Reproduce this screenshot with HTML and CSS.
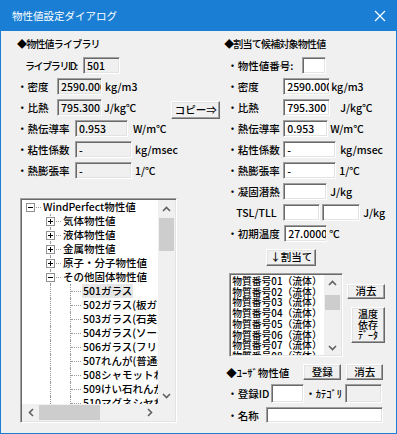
FILE: index.html
```html
<!DOCTYPE html>
<html lang="ja">
<head>
    <meta charset="UTF-8">
    <title>物性値設定ダイアログ</title>
    <link rel="stylesheet" href="styles.css">
</head>
<body>

<div class="window">
    <div class="titlebar">
        <span class="title">物性値設定ダイアログ</span>
        <svg class="close" width="12" height="12" viewBox="0 0 12 12"><path d="M1 1 L11 11 M11 1 L1 11" stroke="#fff" stroke-width="1.2"/></svg>
    </div>

    <div class="body">
        <!-- left: library values -->
        <div class="left">
            <div class="heading">◆物性値ライブラリ</div>
            <div class="rows">
                <div class="row id-row">
                    <span class="lbl w58 narrow">ライブラリID:</span>
                    <div class="field ro w37">501</div>
                </div>
                <div class="row">
                    <span class="lbl w40">・密度</span>
                    <div class="field ro w45">2590.000</div>
                    <span class="unit m3">kg/m3</span>
                </div>
                <div class="row">
                    <span class="lbl w40">・比熱</span>
                    <div class="field ro w45">795.300</div>
                    <span class="unit m2">J/kg℃</span>
                    <button class="btn copy-btn">コピー⇒</button>
                </div>
                <div class="row">
                    <span class="lbl w58">・熱伝導率</span>
                    <div class="field ro w53">0.953</div>
                    <span class="unit m5">W/m℃</span>
                </div>
                <div class="row">
                    <span class="lbl w58">・粘性係数</span>
                    <div class="field ro w57">-</div>
                    <span class="unit m3">kg/msec</span>
                </div>
                <div class="row">
                    <span class="lbl w58">・熱膨張率</span>
                    <div class="field ro w57">-</div>
                    <span class="unit m3">1/℃</span>
                </div>
            </div>

            <div class="tree">
                <div class="tree-view">
                    <div class="node"><span class="ind exp"><i class="box"></i></span><span class="txt">WindPerfect物性値</span></div>
                    <div class="node"><span class="ind"></span><span class="ind exp vl"><i class="box plus"></i></span><span class="txt">気体物性値</span></div>
                    <div class="node"><span class="ind"></span><span class="ind exp vl"><i class="box plus"></i></span><span class="txt">液体物性値</span></div>
                    <div class="node"><span class="ind"></span><span class="ind exp vl"><i class="box plus"></i></span><span class="txt">金属物性値</span></div>
                    <div class="node"><span class="ind"></span><span class="ind exp vl"><i class="box plus"></i></span><span class="txt">原子・分子物性値</span></div>
                    <div class="node"><span class="ind"></span><span class="ind exp vl"><i class="box"></i></span><span class="txt">その他固体物性値</span></div>
                    <div class="node"><span class="ind"></span><span class="ind vl"></span><span class="ind leaf vl"></span><span class="txt sel">501ガラス</span></div>
                    <div class="node"><span class="ind"></span><span class="ind vl"></span><span class="ind leaf vl"></span><span class="txt">502ガラス(板ガラス)</span></div>
                    <div class="node"><span class="ind"></span><span class="ind vl"></span><span class="ind leaf vl"></span><span class="txt">503ガラス(石英ガラス)</span></div>
                    <div class="node"><span class="ind"></span><span class="ind vl"></span><span class="ind leaf vl"></span><span class="txt">504ガラス(ソーダガラス)</span></div>
                    <div class="node"><span class="ind"></span><span class="ind vl"></span><span class="ind leaf vl"></span><span class="txt">506ガラス(フリントガラス)</span></div>
                    <div class="node"><span class="ind"></span><span class="ind vl"></span><span class="ind leaf vl"></span><span class="txt">507れんが(普通赤れんが)</span></div>
                    <div class="node"><span class="ind"></span><span class="ind vl"></span><span class="ind leaf vl"></span><span class="txt">508シャモットれんが</span></div>
                    <div class="node"><span class="ind"></span><span class="ind vl"></span><span class="ind leaf vl"></span><span class="txt">509けい石れんが(</span></div>
                    <div class="node"><span class="ind"></span><span class="ind vl"></span><span class="ind leaf vl"></span><span class="txt">510マグネシヤれんが</span></div>
                </div>
                <div class="vscroll">
                    <div class="arrow"><svg width="9" height="6" viewBox="0 0 9 6"><path d="M1 5 L4.5 1.5 L8 5" fill="none" stroke="#606060" stroke-width="1.6"/></svg></div>
                    <div class="track"><div class="thumb v-thumb"></div></div>
                    <div class="arrow"><svg width="9" height="6" viewBox="0 0 9 6"><path d="M1 1 L4.5 4.5 L8 1" fill="none" stroke="#606060" stroke-width="1.6"/></svg></div>
                </div>
                <div class="hscroll">
                    <div class="arrow"><svg width="6" height="9" viewBox="0 0 6 9"><path d="M5 1 L1.5 4.5 L5 8" fill="none" stroke="#606060" stroke-width="1.6"/></svg></div>
                    <div class="track"><div class="thumb h-thumb"></div></div>
                    <div class="arrow"><svg width="6" height="9" viewBox="0 0 6 9"><path d="M1 1 L4.5 4.5 L1 8" fill="none" stroke="#606060" stroke-width="1.6"/></svg></div>
                </div>
                <div class="corner"></div>
            </div>
        </div>

        <!-- right: assignment target -->
        <div class="right">
            <div class="heading">◆割当て候補対象物性値</div>
            <div class="rows">
                <div class="row">
                    <span class="lbl w75">・物性値番号:</span>
                    <div class="field w24"></div>
                </div>
                <div class="row">
                    <span class="lbl w56">・密度</span>
                    <div class="field w47">2590.000</div>
                    <span class="unit m1">kg/m3</span>
                </div>
                <div class="row">
                    <span class="lbl w56">・比熱</span>
                    <div class="field w47">795.300</div>
                    <span class="unit m10">J/kg℃</span>
                </div>
                <div class="row">
                    <span class="lbl w56">・熱伝導率</span>
                    <div class="field w45">0.953</div>
                    <span class="unit m2">W/m℃</span>
                </div>
                <div class="row">
                    <span class="lbl w56">・粘性係数</span>
                    <div class="field w53">-</div>
                    <span class="unit m4">kg/msec</span>
                </div>
                <div class="row">
                    <span class="lbl w56">・熱膨張率</span>
                    <div class="field w53">-</div>
                    <span class="unit m3">1/℃</span>
                </div>
                <div class="row">
                    <span class="lbl w56">・凝固潜熱</span>
                    <div class="field w44"></div>
                    <span class="unit m3">J/kg</span>
                </div>
                <div class="row">
                    <span class="lbl w56 tsl">TSL/TLL</span>
                    <div class="field w37"></div>
                    <div class="field w38 gap2"></div>
                    <span class="unit m3">J/kg</span>
                </div>
                <div class="row">
                    <span class="lbl w57">・初期温度</span>
                    <div class="field w43">27.00000</div>
                    <span class="unit m2">℃</span>
                </div>
            </div>

            <button class="btn assign-btn">↓割当て</button>

            <div class="list-area">
                <div class="listbox">
                    <div class="list-items">
                        <div>物質番号01（流体）</div>
                        <div>物質番号02（流体）</div>
                        <div>物質番号03（流体）</div>
                        <div>物質番号04（流体）</div>
                        <div>物質番号05（流体）</div>
                        <div>物質番号06（流体）</div>
                        <div>物質番号07（流体）</div>
                        <div>物質番号08（流体）</div>
                    </div>
                    <div class="vscroll list-scroll">
                        <div class="arrow"><svg width="9" height="6" viewBox="0 0 9 6"><path d="M1 5 L4.5 1.5 L8 5" fill="none" stroke="#606060" stroke-width="1.6"/></svg></div>
                        <div class="track"><div class="thumb l-thumb"></div></div>
                        <div class="arrow"><svg width="9" height="6" viewBox="0 0 9 6"><path d="M1 1 L4.5 4.5 L8 1" fill="none" stroke="#606060" stroke-width="1.6"/></svg></div>
                    </div>
                </div>
                <div class="list-buttons">
                    <button class="btn del-btn">消去</button>
                    <button class="btn temp-btn">温度<br>依存<br>ﾃﾞｰﾀ</button>
                </div>
            </div>

            <div class="user-row">
                <span class="user-head">◆ﾕｰｻﾞ物性値</span>
                <button class="btn reg-btn">登録</button>
                <button class="btn del2-btn">消去</button>
            </div>
            <div class="row reg-row">
                <span class="lbl w44">・登録ID</span>
                <div class="field w33 tall"></div>
                <span class="lbl cat">・ｶﾃｺﾞﾘ</span>
                <div class="field ro w37 tall"></div>
            </div>
            <div class="row name-row">
                <span class="lbl w39">・名称</span>
                <div class="field w117"></div>
            </div>
        </div>
    </div>
</div>

</body>
</html>
```

FILE: styles.css
```css
body {
    margin: 0;
    font-family: "Noto Sans CJK JP", "Noto Sans", sans-serif;
    font-size: 10.5px;
    font-weight: 500;
    color: #000;
    background: #f0f0f0;
}

.window {
    width: 397px;
    height: 434px;
    box-sizing: border-box;
    border: 1px solid #1a7fd4;
    border-top: none;
    background: #f0f0f0;
    display: flex;
    flex-direction: column;
}

.titlebar {
    flex: none;
    height: 31px;
    background: #1a7fd4;
    color: #fff;
    display: flex;
    align-items: center;
    padding: 0 10px 0 11px;
}

.title {
    flex: 1;
    font-size: 10.5px;
    font-weight: 400;
}

.body {
    flex: 1;
    display: flex;
}

.left {
    width: 224px;
    box-sizing: border-box;
    padding: 6px 3px 0 16px;
}

.right {
    flex: 1;
    padding: 6px 11px 0 4px;
}

.heading {
    height: 14px;
    line-height: 14px;
    margin-bottom: 6px;
    font-size: 10px;
    letter-spacing: -0.8px;
}

.right .heading {
    margin-left: -3px;
}

.rows {
    display: flex;
    flex-direction: column;
    gap: 4px;
}

.row {
    display: flex;
    align-items: center;
    height: 17px;
}

.lbl {
    flex: none;
    white-space: nowrap;
}

.narrow {
    font-size: 10px;
    letter-spacing: -1.4px;
}

.id-row { margin-left: 8px; }
.tsl { padding-left: 9px; box-sizing: border-box; }

.w24 { width: 24px; }
.w33 { width: 33px; }
.w37 { width: 37px; }
.w38 { width: 38px; }
.w39 { width: 39px; }
.w40 { width: 40px; }
.w43 { width: 43px; }
.w44 { width: 44px; }
.w45 { width: 45px; }
.w47 { width: 47px; }
.w53 { width: 53px; }
.w56 { width: 56px; }
.w57 { width: 57px; }
.w58 { width: 58px; }
.w75 { width: 75px; }
.w117 { width: 117px; }

.m1 { margin-left: 1px; }
.m2 { margin-left: 2px; }
.m3 { margin-left: 3px; }
.m4 { margin-left: 4px; }
.m5 { margin-left: 5px; }
.m10 { margin-left: 10px; }
.gap2 { margin-left: 2px; }

.field {
    flex: none;
    height: 17px;
    box-sizing: border-box;
    background: #fff;
    border: 1px solid;
    border-color: #a0a0a0 #fff #fff #a0a0a0;
    box-shadow: inset 1px 1px #696969, inset -1px -1px #e3e3e3;
    padding: 0 0 0 3px;
    line-height: 15px;
    white-space: nowrap;
    overflow: hidden;
}

.field.ro {
    background: #f0f0f0;
}

.field.tall {
    height: 19px;
}

.unit {
    white-space: nowrap;
}

.btn {
    font-family: inherit;
    font-size: 10.5px;
    font-weight: 500;
    color: #000;
    background: #f0f0f0;
    border: 1px solid;
    border-color: #fff #696969 #696969 #fff;
    box-shadow: inset -1px -1px #a0a0a0, inset 1px 1px #e3e3e3;
    padding: 0;
    margin: 0;
    line-height: 1;
}

.copy-btn {
    margin-left: auto;
    align-self: flex-start;
    margin-top: 2px;
    width: 49px;
    height: 18px;
}

/* tree */
.tree {
    margin: 19px 0 0 3px;
    width: 157px;
    height: 225px;
    box-sizing: border-box;
    border: 1px solid;
    border-color: #a0a0a0 #fff #fff #a0a0a0;
    box-shadow: inset 1px 1px #696969, inset -1px -1px #e3e3e3;
    padding: 1px;
    display: grid;
    grid-template-columns: 1fr 17px;
    grid-template-rows: 1fr 17px;
}

.tree-view {
    background: #fff;
    overflow: hidden;
}

.node {
    display: flex;
    height: 14px;
    line-height: 14px;
    white-space: nowrap;
}

.ind {
    flex: none;
    width: 20px;
    height: 14px;
    position: relative;
}

.ind.vl::before {
    content: "";
    position: absolute;
    left: 8px;
    top: 0;
    bottom: 0;
    border-left: 1px dotted #9a9a9a;
}

.ind.exp::after,
.ind.leaf::after {
    content: "";
    position: absolute;
    left: 9px;
    right: 1px;
    top: 7px;
    border-top: 1px dotted #9a9a9a;
}

.box {
    position: absolute;
    left: 4px;
    top: 3px;
    width: 9px;
    height: 9px;
    box-sizing: border-box;
    border: 1px solid #919191;
    background: #fff;
    z-index: 1;
}

.box::before {
    content: "";
    position: absolute;
    left: 1px;
    top: 3px;
    width: 5px;
    height: 1px;
    background: #000;
}

.box.plus::after {
    content: "";
    position: absolute;
    left: 3px;
    top: 1px;
    width: 1px;
    height: 5px;
    background: #000;
}

.txt {
    padding: 0 1px;
}

.txt.sel {
    background: #e6e6e6;
}

.vscroll {
    background: #f0f0f0;
    display: flex;
    flex-direction: column;
}

.hscroll {
    background: #f0f0f0;
    display: flex;
}

.corner {
    background: #f0f0f0;
}

.arrow {
    flex: none;
    width: 17px;
    height: 17px;
    display: flex;
    align-items: center;
    justify-content: center;
}

.track {
    flex: 1;
}

.thumb {
    background: #cdcdcd;
}

.v-thumb {
    margin: 1px 1px 0;
    height: 33px;
}

.h-thumb {
    margin: 1px 0 0;
    width: 61px;
    height: 15px;
}

/* right lower part */
.assign-btn {
    display: block;
    margin: 7px 0 0 39px;
    width: 50px;
    height: 17px;
}

.list-area {
    display: flex;
    margin-top: 7px;
}

.listbox {
    margin-left: 2px;
    width: 114px;
    height: 84px;
    box-sizing: border-box;
    border: 1px solid;
    border-color: #a0a0a0 #fff #fff #a0a0a0;
    box-shadow: inset 1px 1px #696969, inset -1px -1px #e3e3e3;
    padding: 1px;
    display: flex;
}

.list-items {
    flex: 1;
    background: #fff;
    overflow: hidden;
    font-size: 9.8px;
    line-height: 10.7px;
    padding: 1px 0 0 1px;
    white-space: nowrap;
}

.list-scroll .arrow {
    height: 15px;
}

.l-thumb {
    margin: 5px 1px 0;
    height: 15px;
}

.list-buttons {
    flex: 1;
    display: flex;
    flex-direction: column;
    align-items: flex-end;
}

.del-btn {
    margin-top: 11px;
    width: 38px;
    height: 15px;
}

.temp-btn {
    margin-top: 8px;
    width: 34px;
    height: 36px;
    font-size: 10px;
    line-height: 10.5px;
}

.user-row {
    display: flex;
    align-items: center;
    height: 16px;
    margin-top: 7px;
}

.user-head {
    margin-left: -1px;
    width: 77px;
}

.reg-btn {
    width: 38px;
    height: 16px;
}

.del2-btn {
    margin-left: 5px;
    width: 37px;
    height: 16px;
}

.reg-row {
    margin-top: 4px;
    height: 19px;
}

.cat {
    margin-left: 1px;
    width: 40px;
}

.name-row {
    margin-top: 4px;
    height: 16px;
}

.name-row .field {
    height: 16px;
}
```
